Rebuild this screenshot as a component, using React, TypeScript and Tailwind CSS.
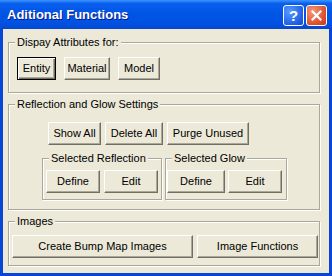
import type { ReactNode } from 'react'

function Btn({ className, children, def }: { className: string; children: ReactNode; def?: boolean }) {
  return (
    <button
      type="button"
      className={
        def
          ? `h-[23px] border border-black bg-[#ECE9D8] text-[11px] leading-none text-black shadow-[inset_1px_1px_#fff,inset_-1px_-1px_#716f64,inset_-2px_-2px_#aca899] ${className}`
          : `h-[23px] border border-b-[#716f64] border-l-white border-r-[#716f64] border-t-white bg-[#ECE9D8] text-[11px] leading-none text-black shadow-[inset_-1px_-1px_#aca899] ${className}`
      }
    >
      {children}
    </button>
  )
}

function Group({ label, className, children }: { label: string; className: string; children: ReactNode }) {
  return (
    <div
      className={`flex flex-col border border-[#aca899] shadow-[1px_1px_0_#fff,inset_1px_1px_0_#fff] ${className}`}
    >
      <span className="-mt-[7px] ml-[6px] self-start bg-[#ECE9D8] px-[2px] text-[11px] leading-[13px] text-black">
        {label}
      </span>
      {children}
    </div>
  )
}

export default function App() {
  return (
    <div className="flex h-[276px] w-[332px] flex-col bg-[#0846d8] font-['Liberation_Sans',Arial,sans-serif]">
      {/* title bar */}
      <div className="flex h-[29px] items-center bg-[linear-gradient(to_bottom,#3d95ff_0%,#0a5fed_12%,#0055e5_45%,#0052e2_80%,#0846d0_100%)] pl-[7px] pr-[5px] pt-[1px]">
        <div className="flex-1 text-[13px] font-bold text-white [text-shadow:1px_1px_#0a1883]">Aditional Functions</div>
        <div className="flex gap-[2px]">
          <div className="grid h-[21px] w-[21px] place-items-center rounded-[3px] border border-white bg-[radial-gradient(circle_at_30%_30%,#5a9cff,#1f5fe6_70%,#1548c8)]">
            <span className="text-[15px] font-bold leading-none text-white">?</span>
          </div>
          <div className="grid h-[21px] w-[21px] place-items-center rounded-[3px] border border-white bg-[radial-gradient(circle_at_30%_30%,#f39a7a,#e0502c_65%,#c4381a)]">
            <svg width="11" height="11" viewBox="0 0 11 11">
              <path d="M1.5 1.5 L9.5 9.5 M9.5 1.5 L1.5 9.5" stroke="#fff" strokeWidth="2.2" strokeLinecap="square" />
            </svg>
          </div>
        </div>
      </div>

      {/* client area */}
      <div className="mx-[3px] mb-[3px] flex flex-1 flex-col bg-[#ECE9D8] pl-[5px] pt-[13px]">
        <Group label="Dispay Attributes for:" className="h-[51px] w-[312px]">
          <div className="ml-[8px] mt-[8px] flex gap-[8px]">
            <Btn className="w-[39px]" def>
              Entity
            </Btn>
            <Btn className="w-[46px]">Material</Btn>
            <Btn className="w-[42px]">Model</Btn>
          </div>
        </Group>

        <Group label="Reflection and Glow Settings" className="mt-[11px] h-[106px] w-[312px]">
          <div className="ml-[39px] mt-[11px] flex gap-[4px]">
            <Btn className="w-[53px]">Show All</Btn>
            <Btn className="w-[58px]">Delete All</Btn>
            <Btn className="w-[82px]">Purge Unused</Btn>
          </div>
          <div className="ml-[33px] mt-[13px] flex gap-[3px]">
            <Group label="Selected Reflection" className="h-[42px] w-[120px]">
              <div className="ml-[3px] mt-[5px] flex gap-[4px]">
                <Btn className="w-[54px]">Define</Btn>
                <Btn className="w-[54px]">Edit</Btn>
              </div>
            </Group>
            <Group label="Selected Glow" className="h-[42px] w-[122px]">
              <div className="ml-[1px] mt-[5px] flex gap-[3px]">
                <Btn className="w-[58px]">Define</Btn>
                <Btn className="w-[54px]">Edit</Btn>
              </div>
            </Group>
          </div>
        </Group>

        <Group label="Images" className="mt-[11px] h-[45px] w-[312px]">
          <div className="ml-[3px] mt-[7px] flex gap-[4px]">
            <Btn className="w-[181px]">Create Bump Map Images</Btn>
            <Btn className="w-[121px]">Image Functions</Btn>
          </div>
        </Group>
      </div>
    </div>
  )
}
